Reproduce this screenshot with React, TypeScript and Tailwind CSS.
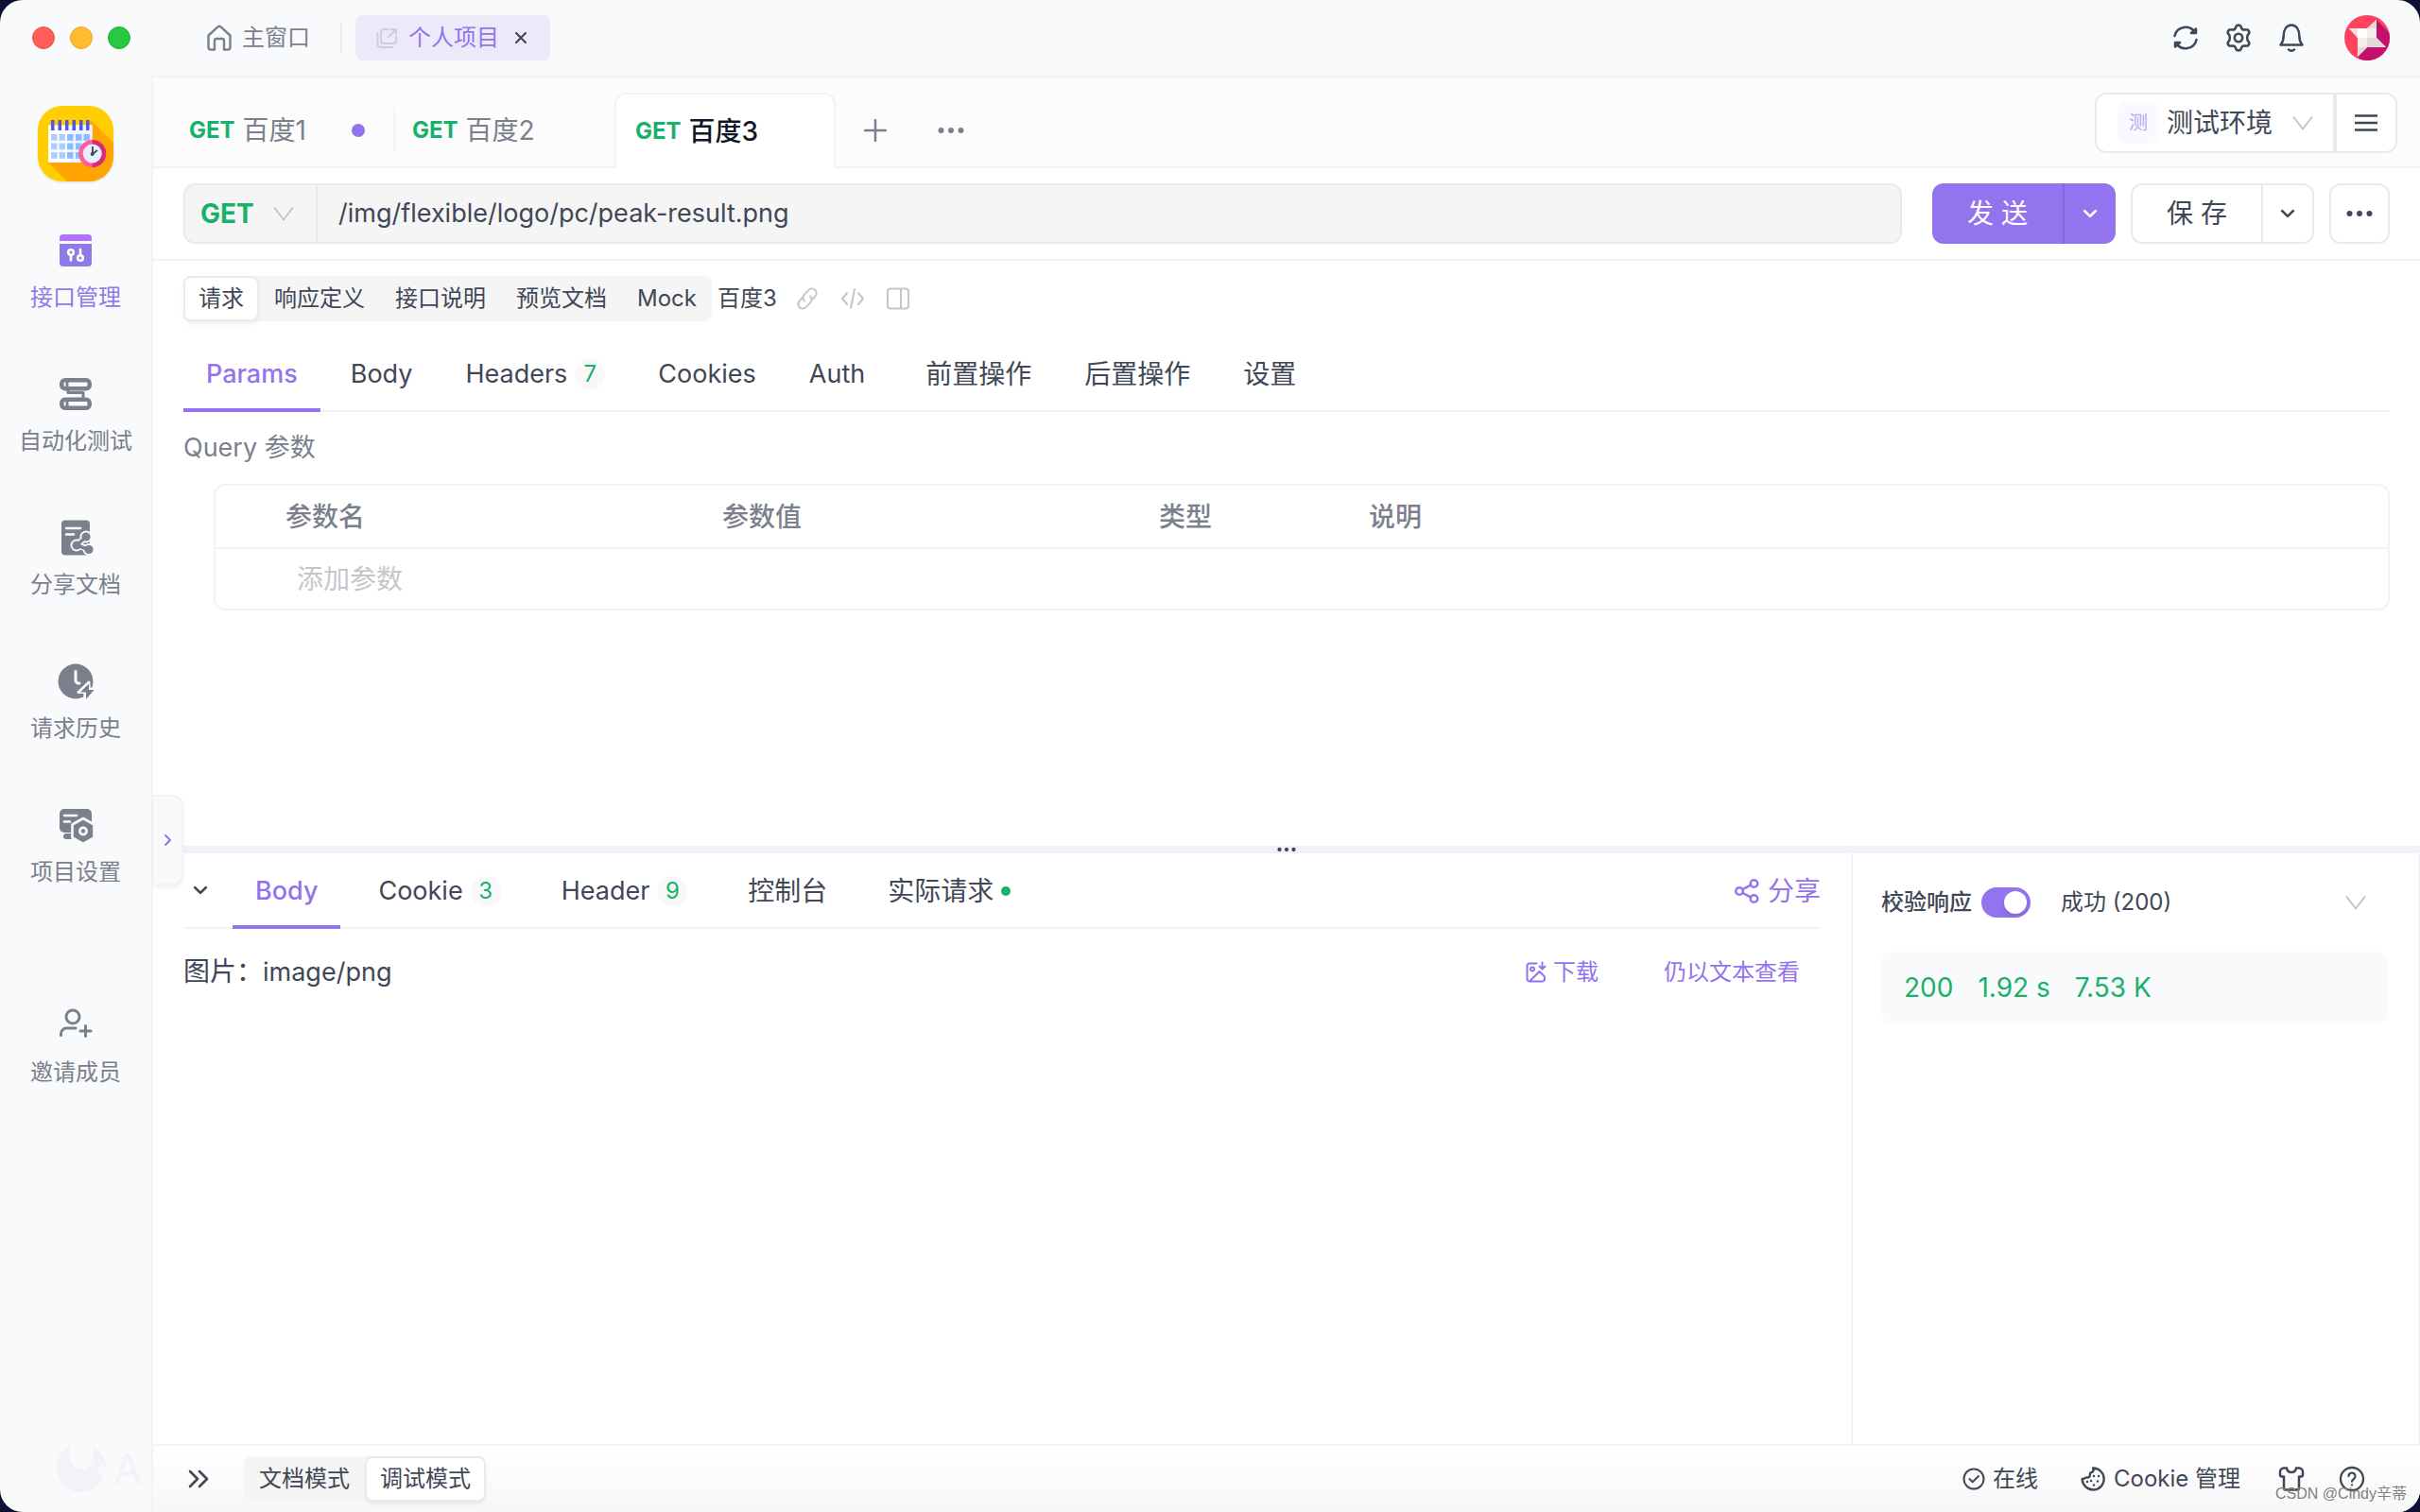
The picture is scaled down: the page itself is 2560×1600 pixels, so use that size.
import { useState, type ReactNode } from "react";
import clsx from "clsx";

const NAV = [
  { label: "接口管理", icon: <ApiIcon /> },
  { label: "自动化测试", icon: <FlowIcon /> },
  { label: "分享文档", icon: <ShareDocIcon /> },
  { label: "请求历史", icon: <HistoryIcon /> },
  { label: "项目设置", icon: <ProjectIcon /> },
];

const VIEWS = ["请求", "响应定义", "接口说明", "预览文档", "Mock"];

const REQUEST_TABS = [
  { label: "Params" },
  { label: "Body" },
  { label: "Headers", count: 7 },
  { label: "Cookies" },
  { label: "Auth", wide: true },
  { label: "前置操作" },
  { label: "后置操作" },
  { label: "设置" },
];

const RESPONSE_TABS = [
  { label: "Body" },
  { label: "Cookie", count: 3 },
  { label: "Header", count: 9 },
  { label: "控制台" },
  { label: "实际请求", dot: true },
];

/* ---------- Icons ---------- */

function Svg({ className, box = 24, children }: { className: string; box?: number; children: ReactNode }) {
  return (
    <svg
      viewBox={`0 0 ${box} ${box}`}
      className={clsx("shrink-0", className)}
      fill="none"
      stroke="currentColor"
      strokeWidth="2"
      strokeLinecap="round"
      strokeLinejoin="round"
      aria-hidden="true"
    >
      {children}
    </svg>
  );
}

function ApiIcon() {
  return (
    <Svg className="size-10" box={40}>
      <path d="M3 10V7a4 4 0 0 1 4-4h26a4 4 0 0 1 4 4v3z" fill="#b072ff" stroke="none" />
      <path d="M3 13h34v20a4 4 0 0 1-4 4H7a4 4 0 0 1-4-4z" fill="#8f7ae8" stroke="none" />
      <g stroke="#fff" strokeWidth="2.6">
        <circle cx="15" cy="22" r="2.8" />
        <path d="M15 25v5.500M25 19v5.500" />
        <circle cx="25" cy="28" r="2.800" />
      </g>
    </Svg>
  );
}

function FlowIcon() {
  return (
    <Svg className="size-10" box={40}>
      <g strokeWidth="4.500">
        <rect x="5.300" y="5.300" width="29.400" height="9" rx="3.500" />
        <rect x="5.300" y="25.700" width="29.400" height="9" rx="3.500" />
      </g>
      <path d="M11 6v8M11 27v8" strokeWidth="3" />
      <path d="M12 15.500v3h16v6" strokeWidth="3" />
    </Svg>
  );
}

function ShareDocIcon() {
  return (
    <Svg className="size-10" box={40}>
      <rect x="5" y="1.500" width="30" height="37" rx="4" fill="currentColor" stroke="none" />
      <path d="M10 10h15M10 16.500h8" stroke="#f9fafc" strokeWidth="2.500" />
      <path d="M31 19 21 28l14 4" stroke="#f9fafc" strokeWidth="7" />
      <g fill="#f9fafc" stroke="none">
        <circle cx="31" cy="19" r="6.500" />
        <circle cx="21" cy="28" r="6.500" />
        <circle cx="34" cy="32.500" r="6.500" />
      </g>
      <path d="M31 19 21 28l13 4.500" strokeWidth="3.500" />
      <g fill="currentColor" stroke="none">
        <circle cx="31" cy="19" r="4.600" />
        <circle cx="21" cy="28" r="4.600" />
        <circle cx="34" cy="32.500" r="4.600" />
      </g>
    </Svg>
  );
}

function HistoryIcon() {
  return (
    <Svg className="size-10" box={40}>
      <circle cx="20" cy="20" r="18.500" fill="currentColor" stroke="none" />
      <path d="M20 9.500v9.500a3 3 0 0 0 3 3h1" stroke="#f9fafc" strokeWidth="3" />
      <path d="M34 21 23 31.500h7L29.500 41 41 28h-7z" fill="currentColor" stroke="#f9fafc" strokeWidth="3" />
      <path d="M34 22.500 25 31.500h6V39l8.500-10H34z" fill="currentColor" stroke="none" />
    </Svg>
  );
}

function ProjectIcon() {
  return (
    <Svg className="size-10" box={40}>
      <rect x="3" y="3" width="34" height="25" rx="5" fill="currentColor" stroke="none" />
      <rect x="7" y="29" width="14" height="6" rx="3" fill="currentColor" stroke="none" />
      <path d="M8 10h13M8 16.500h6" stroke="#f9fafc" strokeWidth="2.500" />
      <path
        d="m28 13 11.500 6.500v14L28 40l-11.500-6.500v-14z"
        fill="currentColor"
        stroke="#f9fafc"
        strokeWidth="2.600"
      />
      <circle cx="28" cy="26.500" r="3.600" stroke="#f9fafc" strokeWidth="2.600" />
    </Svg>
  );
}

function InviteIcon() {
  return (
    <Svg className="size-10" box={40}>
      <g strokeWidth="3">
        <circle cx="17" cy="11" r="7" />
        <path d="M4.500 30.500V29a6 6 0 0 1 6-6H20M30.500 20.500v11M25 26h11" />
      </g>
    </Svg>
  );
}

function Chevron({ className = "" }: { className?: string }) {
  return (
    <Svg className={clsx("pointer-events-none h-6 w-6 text-[#c4c6cc]", className)}>
      <path d="m2.500 6 9.500 12.500L21.500 6" />
    </Svg>
  );
}

function ArrowDown() {
  return (
    <Svg className="size-5">
      <path d="m5 8.500 7 7 7-7" strokeWidth="3.200" />
    </Svg>
  );
}

function Dots({ className }: { className: string }) {
  return (
    <Svg className={className} box={28}>
      <g fill="currentColor" stroke="none">
        <circle cx="3.500" cy="14" r="3" />
        <circle cx="14" cy="14" r="3" />
        <circle cx="24.500" cy="14" r="3" />
      </g>
    </Svg>
  );
}

function ProjectLogo() {
  return (
    <svg viewBox="0 0 80 80" className="size-20 rounded-[26px] shadow-sm" role="img" aria-label="个人项目">
      <rect width="80" height="80" fill="#ffcd00" />
      <path d="M11 60 31 80h49V39L56 15z" fill="#ffa400" />
      <path d="M11 20.500h46.500V60H11z" fill="#fff" />
      <path d="M34 20.500h23.500V60H34z" fill="#eef4ff" />
      {[14, 21.5, 29, 36.5, 44, 51].map((x) => (
        <rect key={x} x={x} y="15" width="3.500" height="11" fill="#5457dc" />
      ))}
      {[30, 39.5, 49].map((y) =>
        [14, 22.5, 31, 40, 48.5].map((x) => (
          <rect key={`${x}-${y}`} x={x} y={y} width="6.500" height="6.800" fill={x > 30 ? "#8abcff" : "#abd0ff"} />
        ))
      )}
      <circle cx="57.700" cy="50.500" r="14.500" fill="#ff5d9c" />
      <path d="M57.700 36a14.500 14.500 0 0 1 0 29z" fill="#d9297c" />
      <circle cx="57.700" cy="50.500" r="10" fill="#e7efff" />
      <path d="M58 43v8l5-4" fill="none" stroke="#3f4552" strokeWidth="1.800" />
      <circle cx="57.700" cy="51" r="2" fill="#3f4552" />
    </svg>
  );
}

function Avatar() {
  return (
    <svg viewBox="0 0 48 48" className="size-12 rounded-full" role="img" aria-label="用户头像">
      <rect width="48" height="48" fill="#ff435c" />
      <path d="M34 5 48 19v29H18l-4-4 10-10h20L34 24z" fill="#c3106b" />
      <path d="M5 14h19L34 5v19l10 10H24L14 44V24z" fill="#f3eeec" />
      <path d="M14 14h10v10H14z" fill="#fff" />
      <path d="m34 5-10 9h10zM24 24h10l10 10H24zM14 34h10L14 44z" fill="#e4dbd9" />
      <path d="m5 14 9 10V14z" fill="#e9e2e0" />
    </svg>
  );
}

/* ---------- Shared controls ---------- */

type TabItem = { label: string; count?: number; dot?: boolean; wide?: boolean };

// Inter runs wide next to the CJK face, so Latin labels go one size down
const isLatin = (text: string) => /^[a-z]+$/i.test(text);

function TabButton({ item, active, onClick }: { item: TabItem; active: boolean; onClick: () => void }) {
  return (
    <button
      role="tab"
      aria-selected={active}
      onClick={onClick}
      className={clsx(
        "flex h-20 shrink-0 items-center gap-2 border-y-4 border-transparent pl-6",
        isLatin(item.label) ? "text-[27px]" : "text-[28px]",
        item.wide ? "pr-8" : "pr-6",
        active && "border-b-[#9373ee] font-medium text-[#9373ee]"
      )}
    >
      {item.label}
      {item.count && (
        <span className="flex size-8 items-center justify-center rounded-full bg-[#f8f8f9] text-2xl font-normal text-[#17b26a]">
          {item.count}
        </span>
      )}
      {item.dot && <span className="size-[10px] rounded-full bg-[#17b26a]" />}
    </button>
  );
}

function Segmented({ items, value, onChange }: { items: string[]; value: string; onChange: (v: string) => void }) {
  return (
    <div className="flex h-12 rounded-lg bg-[#f5f5f5]">
      {items.map((item) => (
        <button
          key={item}
          onClick={() => onChange(item)}
          className={clsx(
            "rounded-lg border-2 px-[14px] text-2xl",
            item === value ? "border-[#e9e9f0] bg-white shadow-md shadow-black/5" : "border-transparent"
          )}
        >
          {item}
        </button>
      ))}
    </div>
  );
}

/* ---------- Layout ---------- */

function TitleBar() {
  return (
    <header className="flex h-20 shrink-0 items-center pr-8 pl-[34px]">
      <div className="flex gap-4">
        <span className="size-6 rounded-full border border-[#e5534b] bg-[#ff5f57]" />
        <span className="size-6 rounded-full border border-[#e3a52a] bg-[#febc2e]" />
        <span className="size-6 rounded-full border border-[#1fae36] bg-[#28c840]" />
      </div>
      <button className="ml-20 flex items-center gap-[10px] text-2xl text-[#7b808c]">
        <Svg className="size-7" box={28}>
          <path
            d="M2.500 11.500 12.200 2.600a2.600 2.600 0 0 1 3.600 0l9.700 8.900V24a2.500 2.500 0 0 1-2.500 2.500h-4V17a2 2 0 0 0-2-2h-6a2 2 0 0 0-2 2v9.500H5A2.500 2.500 0 0 1 2.500 24z"
            strokeWidth="2.400"
          />
        </Svg>
        主窗口
      </button>
      <span className="ml-8 h-8 w-[2px] bg-[#e9e9f0]" />
      <div className="ml-[14px] flex h-12 items-center rounded-lg bg-[#ece9f9] pr-[14px] pl-[22px] text-2xl text-[#9373ee]">
        <Svg className="mr-[10px] size-6 text-[#d0cdda]">
          <path d="M13 3H8a3 3 0 0 0-3 3v9a3 3 0 0 0 3 3h10a3 3 0 0 0 3-3v-4M16 3h5v5M21 3l-8 8M1.500 7v12a3 3 0 0 0 3 3H17" />
        </Svg>
        个人项目
        <button aria-label="关闭项目" className="ml-[6px] p-2 text-[#404756]">
          <Svg className="size-[18px]" box={20}>
            <path d="m4.500 4.500 11 11M15.500 4.500l-11 11" strokeWidth="2.400" />
          </Svg>
        </button>
      </div>

      <div className="ml-auto flex items-center text-[#404756]">
        <button aria-label="刷新" className="flex w-14 justify-center">
          <Svg className="size-7" box={28}>
            <g strokeWidth="2.500">
              <path d="M2.500 12A11.700 11.700 0 0 1 24 8.500M25.500 16A11.700 11.700 0 0 1 4 19.500" />
              <path d="M25 4.500V9h-5zM3 23.500V19h5z" fill="currentColor" />
            </g>
          </Svg>
        </button>
        <button aria-label="设置" className="flex w-14 justify-center">
          <Svg className="size-8" box={32}>
            <g strokeWidth="2.600">
              <path d="M16 2.500c1.500 0 2.600 1.200 3 2.600.5 1.700 2.200 2.700 4 2.300 1.500-.4 3.100 0 3.900 1.300.8 1.400.3 2.900-.8 4-1.200 1.200-1.200 5.400 0 6.600 1.100 1.100 1.600 2.600.8 4-.8 1.300-2.400 1.700-3.900 1.300-1.800-.4-3.500.6-4 2.300-.4 1.400-1.500 2.600-3 2.600s-2.600-1.200-3-2.600c-.5-1.700-2.200-2.700-4-2.300-1.500.4-3.100 0-3.900-1.300-.8-1.400-.3-2.900.8-4 1.200-1.200 1.200-5.400 0-6.600-1.100-1.100-1.600-2.600-.8-4C5.900 7.400 7.500 7 9 7.400c1.800.4 3.500-.6 4-2.300.4-1.400 1.500-2.600 3-2.600z" />
              <circle cx="16" cy="16" r="4.200" />
            </g>
          </Svg>
        </button>
        <button aria-label="通知" className="flex w-14 justify-center">
          <Svg className="size-8" box={32}>
            <path
              d="M4.500 23.500c2-2.500 3.200-5.500 3.200-9.500C7.700 7 11 2.500 16 2.500S24.300 7 24.300 14c0 4 1.200 7 3.200 9.500zM13 28.500a4.500 4.500 0 0 0 6 0"
              strokeWidth="2.500"
            />
          </Svg>
        </button>
        <button aria-label="账户" className="ml-7">
          <Avatar />
        </button>
      </div>
    </header>
  );
}

function Sidebar() {
  const [active, setActive] = useState("接口管理");

  return (
    <aside className="relative flex w-[162px] shrink-0 flex-col items-center overflow-hidden border-r-2 border-[#f2f2f7] pt-8 text-2xl text-[#7b808c]">
      <ProjectLogo />
      <nav className="mt-[53px] flex flex-col items-center gap-[66px]">
        {NAV.map(({ label, icon }) => (
          <button
            key={label}
            onClick={() => setActive(label)}
            className={clsx("flex flex-col items-center gap-[14px]", active === label && "text-[#8f7ae8]")}
          >
            {icon}
            <span>{label}</span>
          </button>
        ))}
      </nav>
      <button className="mt-[126px] flex flex-col items-center gap-[14px]">
        <InviteIcon />
        <span>邀请成员</span>
      </button>

      {/* Faded brand mark */}
      <div className="absolute bottom-5 left-[60px] flex items-center gap-2 text-[#f2f3f6]">
        <svg viewBox="0 0 52 52" className="size-13" fill="currentColor" aria-hidden="true">
          <path d="M14 2C10 14 16 26 26 27c10 0 15-12 12-25 8 4 14 13 14 23l-5-3-4 4 3 4-4 1c8 5 7 3 7 3-4 10-13 17-24 17C12 51 0 40 0 26 0 15 5 6 14 2z" />
        </svg>
        <span className="text-[44px] leading-none">A</span>
      </div>
    </aside>
  );
}

function FileTabs() {
  return (
    <div className="flex shrink-0 items-start border-b-2 border-[#f2f2f7] bg-[#fcfcfd] pt-4 pr-6 pl-[18px]">
      <div className="-mb-[2px] flex h-20 items-center text-[28px] text-[#7b808c]">
        <button className="flex h-12 w-[236px] items-center gap-2 pl-5">
          <b className="text-2xl text-[#17b26a]">GET</b>
          百度1
          <span className="mr-[30px] ml-auto size-[14px] rounded-full bg-[#9373ee]" />
        </button>
        <button className="flex h-12 w-[234px] items-center gap-2 border-l-2 border-[#f2f2f7] pl-[18px]">
          <b className="text-2xl text-[#17b26a]">GET</b>
          百度2
        </button>
        <button className="flex h-20 w-[234px] items-center gap-2 rounded-t-xl border-2 border-b-0 border-[#f2f2f7] bg-white pl-5 font-medium text-[#101828]">
          <b className="text-2xl text-[#17b26a]">GET</b>
          百度3
        </button>
        <button aria-label="新建" className="flex w-[84px] justify-center">
          <Svg className="size-6">
            <path d="M12 1v22M1 12h22" strokeWidth="2.500" />
          </Svg>
        </button>
        <button aria-label="更多标签" className="flex w-[76px] justify-center">
          <Dots className="size-7" />
        </button>
      </div>

      <div className="ml-auto flex h-16 bg-white">
        <div className="relative flex w-[254px] items-center rounded-l-xl border-2 border-[#e9e9f0] pl-[22px]">
          <span className="flex size-11 items-center justify-center rounded-lg bg-[#faf9ff] text-xl text-[#b9a4f4]">
            测
          </span>
          <select aria-label="环境" className="h-full flex-1 appearance-none bg-transparent pl-2 text-[28px]">
            <option>测试环境</option>
          </select>
          <Chevron className="absolute right-5" />
        </div>
        <button
          aria-label="环境管理"
          className="flex w-[66px] items-center justify-center rounded-r-xl border-2 border-[#e9e9f0]"
        >
          <Svg className="size-6">
            <path d="M0 4.500h24M0 12h24M0 19.500h24" strokeWidth="2.500" strokeLinecap="butt" />
          </Svg>
        </button>
      </div>
    </div>
  );
}

function UrlBar() {
  return (
    <div className="flex items-center border-b-2 border-[#f2f2f7] px-8 py-4">
      <div className="mr-8 flex h-16 flex-1 rounded-xl border-2 border-[#e9e9f0] bg-[#f5f5f5]">
        <div className="relative flex w-[140px] items-center border-r-2 border-[#e9e9f0]">
          <select
            aria-label="请求方法"
            className="h-full w-full appearance-none bg-transparent pl-4 text-[28px] font-bold text-[#17b26a]"
          >
            <option>GET</option>
          </select>
          <Chevron className="absolute right-[22px]" />
        </div>
        <input
          aria-label="接口路径"
          defaultValue="/img/flexible/logo/pc/peak-result.png"
          className="flex-1 bg-transparent px-[22px] text-[27px] outline-none"
        />
      </div>

      <div className="flex h-16 overflow-hidden rounded-xl bg-[#9373ee] text-white">
        <button className="w-[138px] text-[28px]">发 送</button>
        <button aria-label="发送选项" className="flex w-14 items-center justify-center border-l-2 border-[#8567dd]">
          <ArrowDown />
        </button>
      </div>
      <div className="ml-4 flex h-16 rounded-xl border-2 border-[#e9e9f0]">
        <button className="w-[136px] text-[28px]">保 存</button>
        <button aria-label="保存选项" className="flex w-[54px] items-center justify-center border-l-2 border-[#e9e9f0]">
          <ArrowDown />
        </button>
      </div>
      <button
        aria-label="更多操作"
        className="ml-4 flex size-16 items-center justify-center rounded-xl border-2 border-[#e9e9f0]"
      >
        <Dots className="size-7" />
      </button>
    </div>
  );
}

function RequestPanel() {
  const [view, setView] = useState("请求");
  const [tab, setTab] = useState("Params");

  return (
    <section className="flex min-h-0 grow-[717] basis-0 flex-col">
      <UrlBar />
      <div className="px-8 pt-4">
        <div className="flex items-center">
          <Segmented items={VIEWS} value={view} onChange={setView} />
          <span className="ml-[6px] text-2xl">百度3</span>
          <div className="ml-5 flex gap-6 text-[#c4c6cc]">
            <button aria-label="复制链接">
              <Svg className="size-6">
                <path d="M9 14.500a4.800 4.800 0 0 1-.3-6.600l4.800-5a4.700 4.700 0 0 1 6.800 6.600L17.500 12.500M15 9.500a4.800 4.800 0 0 1 .3 6.600l-4.800 5a4.700 4.700 0 0 1-6.800-6.600l2.800-3" />
              </Svg>
            </button>
            <button aria-label="生成代码">
              <Svg className="size-6">
                <path d="m6 6-5 6 5 6M18 6l5 6-5 6M14 2l-4 20" />
              </Svg>
            </button>
            <button aria-label="侧边栏">
              <Svg className="size-6">
                <rect x="1" y="1.500" width="22" height="21" rx="3" />
                <path d="M15 2v20" />
              </Svg>
            </button>
          </div>
        </div>

        <div role="tablist" className="mt-4 flex h-20 gap-2 border-b-2 border-[#f2f2f7]">
          {REQUEST_TABS.map((item) => (
            <TabButton key={item.label} item={item} active={tab === item.label} onClick={() => setTab(item.label)} />
          ))}
        </div>

        <h2 className="mt-[18px] text-[27px] leading-10 text-[#7b808c]">Query 参数</h2>
        <div className="mt-[18px] ml-8 rounded-xl border-2 border-[#f2f2f7]">
          <table className="w-full table-fixed text-left text-[28px]">
            <colgroup>
              <col className="w-[58px]" />
              <col className="w-[462px]" />
              <col className="w-[462px]" />
              <col className="w-[222px]" />
              <col />
            </colgroup>
            <thead>
              <tr className="h-[66px] border-b-2 border-[#f2f2f7] text-[#7b808c]">
                <td />
                <th className="pl-4 font-medium">参数名</th>
                <th className="pl-4 font-medium">参数值</th>
                <th className="pl-4 font-medium">类型</th>
                <th className="pl-4 font-medium">说明</th>
              </tr>
            </thead>
            <tbody>
              <tr className="h-16">
                <td />
                <td colSpan={4} className="pl-7">
                  <input
                    aria-label="添加参数"
                    placeholder="添加参数"
                    className="block w-full bg-transparent outline-none placeholder:text-[#c4c6cc]"
                  />
                </td>
              </tr>
            </tbody>
          </table>
        </div>
      </div>
    </section>
  );
}

function Splitter() {
  return (
    <div className="relative shrink-0 pl-8">
      <div className="flex h-2 items-center justify-center bg-[#f1f2f7] pr-8">
        <Dots className="size-5" />
      </div>
      <button
        aria-label="展开目录"
        className="absolute -top-[54px] left-0 flex h-24 w-8 items-center justify-center rounded-r-xl border-2 border-l-0 border-[#f2f2f7] bg-[#fafafb] text-[#9373ee] shadow-md shadow-black/5"
      >
        <Svg className="size-4" box={16}>
          <path d="m6 3 5 5-5 5" />
        </Svg>
      </button>
    </div>
  );
}

function ResponsePanel() {
  const [tab, setTab] = useState("Body");

  return (
    <section className="flex min-h-0 grow-[625] basis-0">
      <div className="flex-1 border-r-2 border-[#f2f2f7] px-8">
        <div className="flex h-20 border-b-2 border-[#f2f2f7]">
          <button aria-label="收起" className="mr-4 flex w-9 items-center justify-center">
            <ArrowDown />
          </button>
          <div role="tablist" className="flex gap-4">
            {RESPONSE_TABS.map((item) => (
              <TabButton key={item.label} item={item} active={tab === item.label} onClick={() => setTab(item.label)} />
            ))}
          </div>
          <button className="ml-auto flex h-20 items-center gap-2 text-[28px] text-[#9373ee]">
            <Svg className="size-7" box={28}>
              <g strokeWidth="2.500">
                <circle cx="6" cy="14" r="3.800" />
                <circle cx="21.500" cy="6" r="3.800" />
                <circle cx="21.500" cy="22" r="3.800" />
                <path d="m9.500 12 8.500-4.300M9.500 16l8.500 4.300" />
              </g>
            </Svg>
            分享
          </button>
        </div>
        <div className="mt-[22px] flex h-12 items-center pr-[22px] text-2xl">
          <p className="text-[28px]">
            图片：<span className="text-[27px]">image/png</span>
          </p>
          <button className="ml-auto flex items-center gap-[6px] text-[#9373ee]">
            <Svg className="size-6">
              <path d="M12.500 2.500H5A2.500 2.500 0 0 0 2.500 5v14A2.500 2.500 0 0 0 5 21.500h13.500A2.500 2.500 0 0 0 21 19v-2.500L15.500 11 5 21.500" />
              <circle cx="8" cy="8.500" r="2" />
              <path d="M18.500 1.500V8M15.500 5.500l3 3 3-3" />
            </Svg>
            下载
          </button>
          <button className="ml-[69px] text-[#9373ee]">仍以文本查看</button>
        </div>
      </div>

      <div className="w-[600px] shrink-0 border-r-2 border-[#f2f2f7] pt-7 pr-8 pl-[30px]">
        <div className="flex h-12 items-center text-2xl">
          <label htmlFor="verify" className="font-medium">
            校验响应
          </label>
          <span className="ml-[10px] flex h-8 w-[52px]">
            <input
              id="verify"
              type="checkbox"
              defaultChecked
              className="h-8 w-[52px] cursor-pointer appearance-none rounded-full bg-[#c4c6cc] p-1 before:block before:size-6 before:rounded-full before:bg-white before:shadow-md checked:bg-[#9373ee] checked:pl-6"
            />
          </span>
          <div className="relative ml-8 flex h-full flex-1 items-center">
            <select aria-label="响应" className="h-full w-full appearance-none bg-transparent">
              <option>成功 (200)</option>
            </select>
            <Chevron className="absolute right-[22px]" />
          </div>
        </div>
        <div className="mt-7 flex h-19 items-center gap-[26px] rounded-xl bg-[#f9fafc] px-6 text-[28px] text-[#17b26a]">
          <span>200</span>
          <span>1.92 s</span>
          <span>7.53 K</span>
        </div>
      </div>
    </section>
  );
}

function Footer() {
  const [mode, setMode] = useState("调试模式");

  return (
    <footer className="relative flex h-18 shrink-0 items-center border-t-2 border-[#f3f3f5] bg-linear-to-b from-white to-[#f7f7f8] pr-[58px] pl-8 text-2xl">
      <button aria-label="展开" className="flex w-8 justify-center">
        <Svg className="size-6">
          <path d="m3 4 8 8-8 8M13 4l8 8-8 8" strokeWidth="2.600" />
        </Svg>
      </button>
      <div className="ml-8">
        <Segmented items={["文档模式", "调试模式"]} value={mode} onChange={setMode} />
      </div>

      <button className="ml-auto flex items-center gap-2">
        <Svg className="size-6">
          <circle cx="12" cy="12" r="10.500" />
          <path d="m7.500 12 3.200 3.200L17 9" />
        </Svg>
        在线
      </button>
      <button className="ml-11 flex items-center gap-2">
        <Svg className="size-7" box={28}>
          <path
            d="M14 2.500c1 1 .5 2.500 0 3.500-1 1.500-2.500 1-3 2.500-.3 1.200.3 2.500-1 3.500-1.500 1-2.500 0-4 .8-1.200.7-1.700 1.500-3.300 1.200A11.500 11.500 0 1 0 14 2.500z"
            strokeWidth="2.400"
          />
          <path d="M15 11h.1M20 11h.1M12 16h.1M19 16.500h.1M15 20.500h.1M8 17h.1" strokeWidth="2.400" />
        </Svg>
        Cookie 管理
      </button>
      <button aria-label="主题" className="ml-10">
        <Svg className="size-7" box={28}>
          <path
            d="M9 2.500c.5 3 2.500 4.500 5 4.500s4.500-1.500 5-4.500h3c2.500 0 4 2 4 4.500v2.500a2 2 0 0 1-2 2h-2v12a2 2 0 0 1-2 2H8a2 2 0 0 1-2-2v-12H4a2 2 0 0 1-2-2V7c0-2.500 1.500-4.500 4-4.500z"
            strokeWidth="2.500"
          />
        </Svg>
      </button>
      <button aria-label="帮助" className="ml-9">
        <Svg className="size-7" box={28}>
          <g strokeWidth="2.300">
            <circle cx="14" cy="14" r="12" />
            <path d="M10.500 11a3.500 3.500 0 1 1 5.500 3c-1.300.8-2 1.400-2 2.700M14 20.300v.1" />
          </g>
        </Svg>
      </button>
      <span className="pointer-events-none absolute right-[14px] bottom-[7px] font-['Liberation_Sans','Noto_Sans_CJK_SC',sans-serif] text-base leading-6 text-[#808080]">
        CSDN @Cindy辛蒂
      </span>
    </footer>
  );
}

export default function App() {
  return (
    <div className="bg-[#0d1030]">
      <div className="flex h-screen flex-col overflow-hidden rounded-3xl bg-[#f9fafc] font-['Inter','Noto_Sans_CJK_SC',sans-serif] text-[#404756]">
        <TitleBar />
        <div className="flex min-h-0 flex-1">
          <Sidebar />
          <main className="flex min-w-0 flex-1 flex-col border-t-2 border-[#f2f2f7] bg-white">
            <FileTabs />
            <RequestPanel />
            <Splitter />
            <ResponsePanel />
            <Footer />
          </main>
        </div>
      </div>
    </div>
  );
}
